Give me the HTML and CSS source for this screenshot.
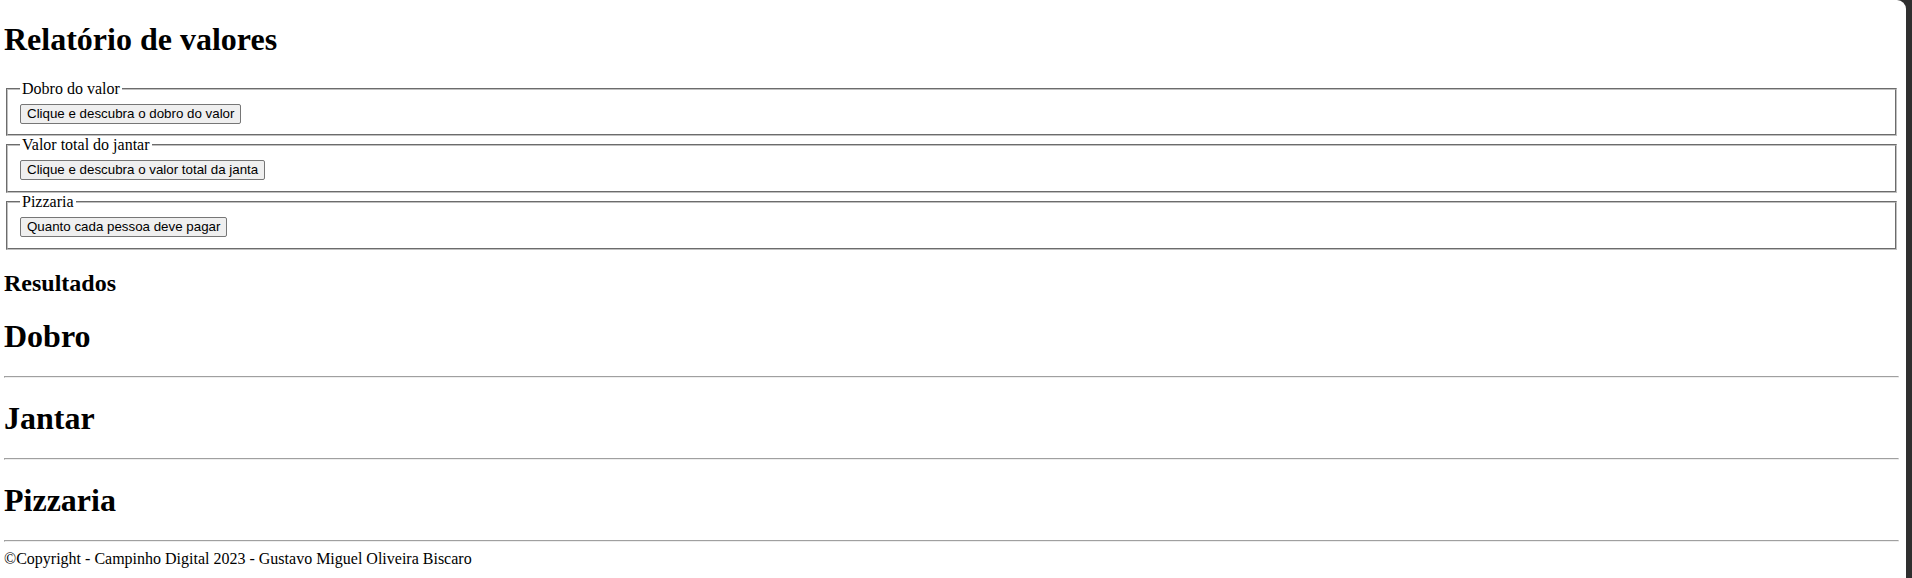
FILE: index.html
```html
<!DOCTYPE html>
<html lang="pt-BR">
<head>
<meta charset="utf-8">
<title>Relatório de valores</title>
<link rel="stylesheet" href="styles.css">
</head>
<body>
<div class="page">
  <h1 class="title">Relatório de valores</h1>
  <fieldset class="box">
    <legend class="box-legend">Dobro do valor</legend>
    <button class="btn" type="button">Clique e descubra o dobro do valor</button>
  </fieldset>
  <fieldset class="box">
    <legend class="box-legend">Valor total do jantar</legend>
    <button class="btn" type="button">Clique e descubra o valor total da janta</button>
  </fieldset>
  <fieldset class="box">
    <legend class="box-legend">Pizzaria</legend>
    <button class="btn" type="button">Quanto cada pessoa deve pagar</button>
  </fieldset>
  <h2 class="subtitle">Resultados</h2>
  <h1 class="result">Dobro</h1>
  <hr class="rule">
  <h1 class="result">Jantar</h1>
  <hr class="rule">
  <h1 class="result">Pizzaria</h1>
  <hr class="rule">
  <footer class="footer">©Copyright - Campinho Digital 2023 - Gustavo Miguel Oliveira Biscaro</footer>
</div>
</body>
</html>
```
FILE: styles.css
```css
html, body {
  margin: 0;
  padding: 0;
  height: 100%;
}
body {
  background: #2f2f2f;
  font-family: "Liberation Serif", "Times New Roman", serif;
  font-size: 16px;
  color: #000;
  overflow: hidden;
}
.page {
  background: #fff;
  margin-right: 6px;
  min-height: 100%;
  border-top-right-radius: 9px;
  padding: 8px 7px 8px 4px;
  box-sizing: border-box;
  display: flow-root;
}
.title, .result {
  font-size: 32px;
  font-weight: bold;
  margin: 21.44px 0;
}
.title {
  margin-top: 13.44px;
}
.subtitle {
  font-size: 24px;
  font-weight: bold;
  margin: 19.92px 0;
}
.box {
  margin: 0 2px;
  padding: 6px 12px 10.6px;
  border: 2px groove rgb(192, 192, 192);
}
.box-legend {
  padding: 0 2px;
}
.btn {
  font-family: "Liberation Sans", Arial, sans-serif;
  font-size: 13.333px;
  line-height: 16px;
  height: 20px;
  padding: 1px 6px;
  background: #efefef;
  border: 1px solid #767676;
  border-radius: 2px;
  color: #000;
  vertical-align: top;
}
.rule {
  margin: 8px 0;
  border-style: solid;
  border-width: 1px;
  border-color: #a0a0a0 #eee #eee #a0a0a0;
  height: 0;
}
.footer {
  margin: 0;
}
```
